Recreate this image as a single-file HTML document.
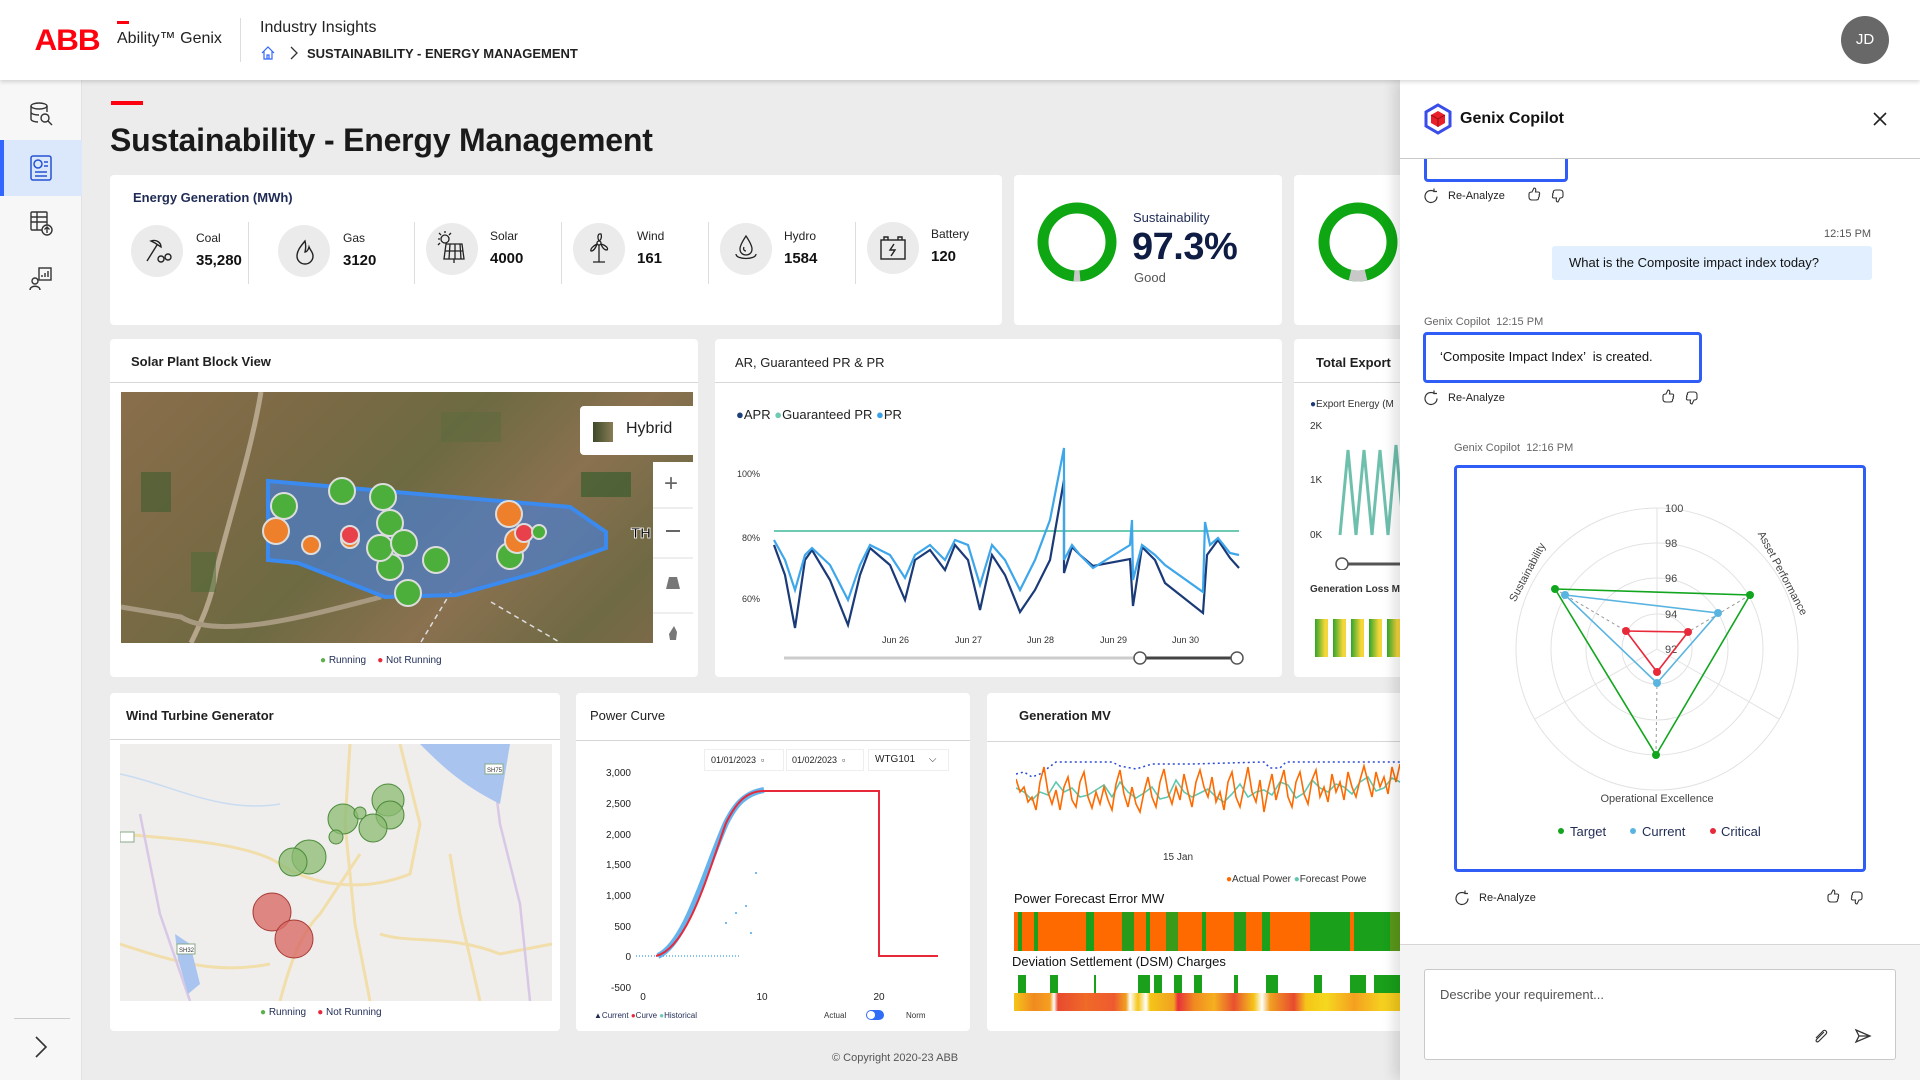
<!DOCTYPE html>
<html><head><meta charset="utf-8">
<style>
*{box-sizing:border-box;margin:0;padding:0}
body{width:1920px;height:1080px;overflow:hidden;background:#ececec;font-family:"Liberation Sans",sans-serif;color:#1f1f1f;position:relative}
.a{position:absolute}
.card{position:absolute;background:#fff;border-radius:4px}
.hd{position:absolute;left:0;right:0;top:0;border-bottom:1px solid #d6d6d6}
.t{position:absolute;white-space:nowrap}
.ic{position:absolute;width:52px;height:52px;border-radius:50%;background:#ebebeb}
.sep{position:absolute;top:222px;width:1px;height:62px;background:#ddd}
.lbl{font-size:12px;color:#222}
.val{font-size:15px;font-weight:bold;color:#111}
</style></head><body>

<!-- header -->
<div class="a" style="left:0;top:0;width:1920px;height:80px;background:#fff;box-shadow:0 2px 4px rgba(0,0,0,.15);z-index:3">
  <div class="t" style="left:36px;top:24px;font-size:30px;font-weight:bold;color:#ff000f;letter-spacing:-1px;transform:scaleX(1.05)">ABB</div>
  <div class="a" style="left:117px;top:21px;width:12px;height:3px;background:#ff000f"></div>
  <div class="t" style="left:117px;top:30px;font-size:16px;color:#222">Ability™ Genix</div>
  <div class="a" style="left:240px;top:18px;width:1px;height:44px;background:#ddd"></div>
  <div class="t" style="left:260px;top:19px;font-size:16px;color:#222">Industry Insights</div>
  <svg class="a" style="left:260px;top:45px" width="16" height="16" viewBox="0 0 16 16"><path d="M2 8 L8 2 L14 8 M4 6.5 V14 H12 V6.5 M7 14 V10 H9 V14" fill="none" stroke="#3366ff" stroke-width="1.2"/></svg>
  <svg class="a" style="left:289px;top:46px" width="10" height="14"><path d="M2 1 L8 7 L2 13" fill="none" stroke="#333" stroke-width="1.3"/></svg>
  <div class="t" style="left:307px;top:46px;font-size:13px;font-weight:bold;color:#222">SUSTAINABILITY - ENERGY MANAGEMENT</div>
  <div class="a" style="left:1841px;top:16px;width:48px;height:48px;border-radius:50%;background:#686868;color:#fff;font-size:15px;text-align:center;line-height:48px">JD</div>
</div>

<!-- sidebar -->
<div class="a" style="left:0;top:80px;width:82px;height:1000px;background:#f7f7f7;border-right:1px solid #e2e2e2">
  <svg class="a" style="left:28px;top:21px" width="26" height="26" viewBox="0 0 26 26" fill="none" stroke="#333" stroke-width="1.4"><ellipse cx="11" cy="5" rx="8" ry="3"/><path d="M3 5 V18 C3 20 7 21 10 21 M19 5 V11 M3 11 C3 13 7 14 11 14"/><circle cx="17" cy="17" r="4"/><path d="M20 20 L24 24"/></svg>
  <div class="a" style="left:0;top:60px;width:82px;height:56px;background:#dbe8fb"></div>
  <div class="a" style="left:0;top:60px;width:4px;height:56px;background:#3366ff"></div>
  <svg class="a" style="left:29px;top:74px" width="24" height="28" viewBox="0 0 24 28" fill="none" stroke="#2452d4" stroke-width="1.5"><rect x="2" y="2" width="20" height="24" rx="2"/><circle cx="9" cy="10" r="4"/><path d="M15 8 H19 M15 12 H19 M6 18 H18 M6 22 H18"/></svg>
  <svg class="a" style="left:29px;top:130px" width="26" height="28" viewBox="0 0 26 28" fill="none" stroke="#333" stroke-width="1.4"><rect x="2" y="2" width="16" height="18" rx="1"/><path d="M2 7 H18 M2 12 H18 M8 2 V20"/><circle cx="18" cy="20" r="5" fill="#f7f7f7"/><path d="M18 23 V17 M15.5 19.5 L18 17 L20.5 19.5"/></svg>
  <svg class="a" style="left:28px;top:186px" width="26" height="26" viewBox="0 0 26 26" fill="none" stroke="#333" stroke-width="1.4"><rect x="11" y="2" width="12" height="12"/><path d="M14 11 V9 M17 11 V7 M20 11 V5"/><circle cx="7" cy="15" r="3"/><path d="M2 24 C2 19 12 19 12 24"/></svg>
  <div class="a" style="left:14px;top:938px;width:56px;height:1px;background:#ccc"></div>
  <svg class="a" style="left:34px;top:955px" width="14" height="24"><path d="M2 2 L12 12 L2 22" fill="none" stroke="#333" stroke-width="1.6"/></svg>
</div>

<!-- title -->
<div class="a" style="left:111px;top:101px;width:32px;height:4px;background:#ff000f"></div>
<div class="t" style="left:110px;top:122px;font-size:32px;font-weight:bold;color:#1a1a1a;letter-spacing:-.2px">Sustainability - Energy Management</div>

<!-- energy card -->
<div class="card" style="left:110px;top:175px;width:892px;height:150px"></div>
<div class="t" style="left:133px;top:190px;font-size:13px;font-weight:bold;color:#1f2b55">Energy Generation (MWh)</div>
<div class="ic" style="left:131px;top:225px"></div>
<svg class="a" style="left:141px;top:235px" width="32" height="32" viewBox="0 0 32 32" fill="none" stroke="#222" stroke-width="1.4"><path d="M6 26 L16 10 M10 6 C16 4 20 8 20 12 L14 8 Z"/><circle cx="20" cy="24" r="3"/><circle cx="27" cy="22" r="3"/></svg>
<div class="t lbl" style="left:196px;top:231px">Coal</div><div class="t val" style="left:196px;top:252px">35,280</div>
<div class="sep" style="left:248px"></div>
<div class="ic" style="left:278px;top:225px"></div>
<svg class="a" style="left:292px;top:237px" width="26" height="30" viewBox="0 0 26 30" fill="none" stroke="#222" stroke-width="1.4"><path d="M13 4 C8 10 5 14 5 19 C5 24 9 27 13 27 C17 27 21 24 21 19 C21 15 18 13 17 10 C16 14 14 15 13 15 C14 11 14 8 13 4 Z"/></svg>
<div class="t lbl" style="left:343px;top:231px">Gas</div><div class="t val" style="left:343px;top:252px">3120</div>
<div class="sep" style="left:414px"></div>
<div class="ic" style="left:426px;top:223px"></div>
<svg class="a" style="left:434px;top:229px" width="36" height="36" viewBox="0 0 36 36" fill="none" stroke="#222" stroke-width="1.3"><circle cx="11" cy="10" r="4"/><path d="M11 2 V4 M4 10 H6 M5 4 L7 6 M17 4 L15 6 M4 16 L6 14"/><path d="M12 15 H28 L30 30 H10 Z M11 22 H29 M16 15 L15 30 M21 15 L21 30 M26 15 L27 30 M20 30 V34"/></svg>
<div class="t lbl" style="left:490px;top:229px">Solar</div><div class="t val" style="left:490px;top:250px">4000</div>
<div class="sep" style="left:561px"></div>
<div class="ic" style="left:573px;top:223px"></div>
<svg class="a" style="left:583px;top:231px" width="32" height="34" viewBox="0 0 32 34" fill="none" stroke="#222" stroke-width="1.3"><circle cx="16" cy="12" r="2"/><path d="M16 10 C14 6 15 2 18 3 C19 6 18 9 16 10 M18 13 C22 14 26 17 24 19 C21 19 19 16 18 13 M14 13 C10 15 7 18 8 20 C11 20 13 16 14 13 M16 14 V31 M10 31 H22"/></svg>
<div class="t lbl" style="left:637px;top:229px">Wind</div><div class="t val" style="left:637px;top:250px">161</div>
<div class="sep" style="left:708px"></div>
<div class="ic" style="left:720px;top:223px"></div>
<svg class="a" style="left:730px;top:232px" width="32" height="32" viewBox="0 0 32 32" fill="none" stroke="#222" stroke-width="1.3"><path d="M16 4 C12 10 10 14 10 17 C10 21 13 23 16 23 C19 23 22 21 22 17 C22 14 20 10 16 4 Z M14 15 C13 17 14 19 16 19"/><path d="M6 22 C6 28 26 28 26 22"/></svg>
<div class="t lbl" style="left:784px;top:229px">Hydro</div><div class="t val" style="left:784px;top:250px">1584</div>
<div class="sep" style="left:855px"></div>
<div class="ic" style="left:867px;top:222px"></div>
<svg class="a" style="left:878px;top:234px" width="30" height="28" viewBox="0 0 30 28" fill="none" stroke="#222" stroke-width="1.4"><rect x="3" y="6" width="24" height="19"/><path d="M6 6 V3 H10 V6 M20 6 V3 H24 V6 M16 10 L12 16 H17 L13 22"/></svg>
<div class="t lbl" style="left:931px;top:227px">Battery</div><div class="t val" style="left:931px;top:248px">120</div>

<!-- sustainability card -->
<div class="card" style="left:1014px;top:175px;width:268px;height:150px"></div>
<svg class="a" style="left:1033px;top:198px" width="88" height="88"><circle cx="44" cy="44" r="34" fill="none" stroke="#0ea612" stroke-width="11"/><path d="M41 78 A34 34 0 0 0 47 78" stroke="#c8c8c8" stroke-width="11" fill="none"/></svg>
<div class="t" style="left:1133px;top:210px;font-size:13px;color:#1f2b55">Sustainability</div>
<div class="t" style="left:1132px;top:226px;font-size:38px;font-weight:bold;color:#0f1d45;letter-spacing:-.5px">97.3%</div>
<div class="t" style="left:1134px;top:270px;font-size:13px;color:#555">Good</div>
<div class="card" style="left:1294px;top:175px;width:140px;height:150px"></div>
<svg class="a" style="left:1314px;top:198px" width="88" height="88"><circle cx="44" cy="44" r="34" fill="none" stroke="#0ea612" stroke-width="11"/><path d="M36 77 A34 34 0 0 0 52 77" stroke="#c8c8c8" stroke-width="11" fill="none"/></svg>

<!-- solar card -->
<div class="card" style="left:110px;top:339px;width:588px;height:338px"><div class="hd" style="height:44px"></div></div>
<div class="t" style="left:131px;top:354px;font-size:13px;font-weight:bold">Solar Plant Block View</div>
<div class="a" style="left:121px;top:392px;width:572px;height:251px;overflow:hidden;background:linear-gradient(135deg,#8a6e4c 0%,#7b6a45 25%,#6d6a42 45%,#8a7150 65%,#6f6a44 85%,#81694a 100%)">
<svg width="572" height="251" style="position:absolute;left:0;top:0">
 <path d="M140 0 C130 60 110 120 95 180 C90 210 80 230 70 251" stroke="#b5a58a" stroke-width="5" fill="none"/>
 <path d="M0 215 L60 225 C100 250 200 220 260 205" stroke="#a89a80" stroke-width="5" fill="none"/>
 <rect x="20" y="80" width="30" height="40" fill="#3f5b2e" opacity=".6"/><rect x="460" y="80" width="50" height="25" fill="#2f5a2a" opacity=".6"/>
 <rect x="70" y="160" width="25" height="40" fill="#4a6a34" opacity=".5"/><rect x="320" y="20" width="60" height="30" fill="#5b6a3c" opacity=".5"/>
 <path d="M300 250 L330 200 M370 210 L440 251" stroke="#ddd" stroke-width="1.5" stroke-dasharray="5 4" fill="none"/>
 <polygon points="147,89 449,115 485,140 485,156 414,181 335,203 264,205 177,171 147,168" fill="#4a7fd0" fill-opacity=".7" stroke="#3a8af0" stroke-width="4"/>
 <g stroke="#ddd" stroke-width="2">
 <circle cx="163" cy="114" r="13" fill="#4caf3c"/><circle cx="155" cy="139" r="13" fill="#ee7f2b"/><circle cx="190" cy="153" r="9" fill="#ee7f2b"/>
 <circle cx="229" cy="147" r="9" fill="#ee7f2b"/><circle cx="229" cy="143" r="9" fill="#e8414b"/>
 <circle cx="221" cy="99" r="13" fill="#4caf3c"/><circle cx="262" cy="105" r="13" fill="#4caf3c"/><circle cx="269" cy="131" r="13" fill="#4caf3c"/>
 <circle cx="269" cy="175" r="13" fill="#4caf3c"/><circle cx="259" cy="156" r="13" fill="#4caf3c"/><circle cx="283" cy="151" r="13" fill="#4caf3c"/>
 <circle cx="315" cy="168" r="13" fill="#4caf3c"/><circle cx="287" cy="201" r="13" fill="#4caf3c"/>
 <circle cx="388" cy="122" r="13" fill="#ee7f2b"/><circle cx="389" cy="164" r="13" fill="#4caf3c"/><circle cx="396" cy="149" r="12" fill="#ee7f2b"/>
 <circle cx="403" cy="141" r="9" fill="#e8414b"/><circle cx="418" cy="140" r="7" fill="#4caf3c"/></g>
 <text x="510" y="146" font-size="15" font-weight="bold" fill="#000" stroke="#fff" stroke-width=".8" font-family="Liberation Sans">TH</text>
</svg>
<div class="a" style="left:459px;top:14px;width:113px;height:49px;background:#fff;border-radius:4px 0 0 4px"></div>
<div class="a" style="left:472px;top:30px;width:20px;height:20px;background:linear-gradient(90deg,#3c4a2a,#8a7b55)"></div>
<div class="t" style="left:505px;top:28px;font-size:16px;color:#222">Hybrid</div>
<div class="a" style="left:532px;top:70px;width:40px;height:181px;background:#fff"></div>
<div class="t" style="left:543px;top:78px;font-size:24px;color:#666">+</div>
<div class="a" style="left:532px;top:115px;width:40px;height:2px;background:#eee"></div>
<div class="a" style="left:545px;top:138px;width:14px;height:2px;background:#666"></div>
<div class="a" style="left:532px;top:165px;width:40px;height:2px;background:#eee"></div>
<svg class="a" style="left:545px;top:185px" width="14" height="12"><path d="M3 0 H11 L14 12 H0 Z" fill="#777"/></svg>
<div class="a" style="left:532px;top:220px;width:40px;height:2px;background:#eee"></div>
<svg class="a" style="left:547px;top:234px" width="10" height="14"><path d="M6 0 L1 8 L2 14 H8 L9 6 Z" fill="#777"/></svg>
</div>
<div class="t" style="left:320px;top:655px;font-size:10px;color:#1f2b55"><span style="color:#5bb04c">●</span> Running &nbsp;&nbsp; <span style="color:#e8293a">●</span> Not Running</div>

<!-- AR card -->
<div class="card" style="left:715px;top:339px;width:567px;height:338px"><div class="hd" style="height:44px"></div></div>
<div class="t" style="left:735px;top:355px;font-size:13px">AR, Guaranteed PR &amp; PR</div>
<div class="t" style="left:736px;top:407px;font-size:13px;color:#222"><span style="color:#1f3f7a">●</span>APR <span style="color:#6fcab4">●</span>Guaranteed PR <span style="color:#3aa0e8">●</span>PR</div>
<div class="t" style="left:737px;top:469px;font-size:9px;color:#333">100%</div>
<div class="t" style="left:742px;top:533px;font-size:9px;color:#333">80%</div>
<div class="t" style="left:742px;top:594px;font-size:9px;color:#333">60%</div>
<svg class="a" style="left:0;top:0" width="1300" height="680">
 <line x1="774" y1="531" x2="1239" y2="531" stroke="#6fcab4" stroke-width="2"/>
 <polyline fill="none" stroke="#1a3a78" stroke-width="2.2" points="774,545 785,575 795,628 805,560 812,550 830,580 848,625 860,575 870,548 890,565 905,600 915,560 930,550 945,570 955,545 968,560 980,610 992,555 1005,575 1020,612 1035,590 1050,560 1064,480 1064,573 1072,547 1080,555 1093,566 1130,559 1133,606 1142,547 1155,560 1165,583 1203,613 1207,555 1218,540 1230,558 1239,568"/>
 <polyline fill="none" stroke="#3ea6ea" stroke-width="2.2" points="774,540 785,560 795,590 805,555 812,548 830,565 848,600 860,565 870,545 890,555 905,578 915,555 930,545 945,560 955,540 968,545 980,585 992,545 1005,560 1020,590 1035,560 1050,520 1064,448 1064,560 1072,545 1080,555 1093,568 1130,545 1132,520 1133,580 1142,545 1155,555 1165,565 1203,592 1205,522 1210,545 1218,538 1230,553 1239,555"/>
 <line x1="784" y1="658" x2="1140" y2="658" stroke="#ccc" stroke-width="3"/>
 <line x1="1140" y1="658" x2="1237" y2="658" stroke="#444" stroke-width="3"/>
 <circle cx="1140" cy="658" r="6" fill="#fff" stroke="#555" stroke-width="1.5"/><circle cx="1237" cy="658" r="6" fill="#fff" stroke="#555" stroke-width="1.5"/>
 <g font-size="9" fill="#333" font-family="Liberation Sans"><text x="882" y="643">Jun 26</text><text x="955" y="643">Jun 27</text><text x="1027" y="643">Jun 28</text><text x="1100" y="643">Jun 29</text><text x="1172" y="643">Jun 30</text></g>
</svg>

<!-- total export -->
<div class="card" style="left:1294px;top:339px;width:140px;height:338px"><div class="hd" style="height:44px"></div></div>
<div class="t" style="left:1316px;top:355px;font-size:13px;font-weight:bold">Total Export</div>
<div class="t" style="left:1310px;top:399px;font-size:10px;color:#333"><span style="color:#1a3a78">●</span>Export Energy (M</div>
<div class="t" style="left:1310px;top:421px;font-size:10px;color:#333">2K</div>
<div class="t" style="left:1310px;top:475px;font-size:10px;color:#333">1K</div>
<div class="t" style="left:1310px;top:530px;font-size:10px;color:#333">0K</div>
<svg class="a" style="left:1330px;top:440px" width="80" height="130"><polyline fill="none" stroke="#6fbfad" stroke-width="3" points="10,95 18,10 26,95 34,10 42,95 50,10 58,95 66,5 74,95"/><line x1="12" y1="124" x2="80" y2="124" stroke="#555" stroke-width="3"/><circle cx="12" cy="124" r="6" fill="#fff" stroke="#555" stroke-width="1.5"/></svg>
<div class="t" style="left:1310px;top:584px;font-size:10px;font-weight:bold;color:#333">Generation Loss M</div>
<div class="a" style="left:1315px;top:619px;width:100px;height:38px;background:repeating-linear-gradient(90deg,#2ea52a 0,#f5d63a 10px,#f5d63a 13px,#fff 13px,#fff 18px)"></div>

<!-- wind card -->
<div class="card" style="left:110px;top:693px;width:450px;height:338px"><div class="hd" style="height:47px"></div></div>
<div class="t" style="left:126px;top:708px;font-size:13px;font-weight:bold">Wind Turbine Generator</div>
<div class="a" style="left:120px;top:744px;width:432px;height:257px;background:#efeeec;overflow:hidden">
<svg width="432" height="257">
 <g fill="none" stroke="#f1deaa" stroke-width="3">
 <path d="M230 0 L225 80 L235 180 L250 257"/><path d="M0 90 C60 95 130 100 160 120 C190 140 240 150 290 130 L300 80 L280 0"/>
 <path d="M160 257 C170 220 180 190 200 170 L240 110"/><path d="M260 190 C290 200 330 190 380 210 L432 200"/><path d="M0 200 C60 220 100 230 150 220"/><path d="M330 110 L340 170 L360 257"/></g>
 <g fill="none" stroke="#d8c8e6" stroke-width="2.5"><path d="M20 70 L40 170 L70 257"/><path d="M370 0 L380 80 L400 160 L410 257"/></g>
 <path d="M300 0 C320 20 340 40 380 60 L390 0 Z" fill="#a9c4ef"/>
 <path d="M55 190 L70 200 L80 240 L68 250 L58 215 Z" fill="#a9c4ef"/>
 <path d="M0 30 C50 40 100 70 160 60" stroke="#c9dcf1" stroke-width="1.5" fill="none"/>
 <g fill="#8bbb72" fill-opacity=".75" stroke="#4b8a3a" stroke-width="1">
 <circle cx="268" cy="56" r="16"/><circle cx="270" cy="71" r="14"/><circle cx="223" cy="75" r="15"/><circle cx="253" cy="84" r="14"/><circle cx="240" cy="69" r="6"/><circle cx="216" cy="93" r="7"/><circle cx="189" cy="113" r="17"/><circle cx="173" cy="118" r="14"/></g>
 <g fill="#d96b66" fill-opacity=".8" stroke="#a83a35" stroke-width="1"><circle cx="152" cy="168" r="19"/><circle cx="174" cy="195" r="19"/></g>
 <g font-size="6" fill="#333" font-family="Liberation Sans"><rect x="365" y="20" width="18" height="10" fill="#fff" stroke="#8a8"/><text x="367" y="28">SH75</text><rect x="0" y="88" width="14" height="10" fill="#fff" stroke="#8a8"/><rect x="57" y="200" width="18" height="10" fill="#fff" stroke="#8a8"/><text x="59" y="208">SH32</text></g>
</svg></div>
<div class="t" style="left:260px;top:1007px;font-size:10px;color:#1f2b55"><span style="color:#5bb04c">●</span> Running &nbsp;&nbsp; <span style="color:#e8293a">●</span> Not Running</div>

<!-- power curve -->
<div class="card" style="left:576px;top:693px;width:394px;height:338px"><div class="hd" style="height:48px"></div></div>
<div class="t" style="left:590px;top:708px;font-size:13px">Power Curve</div>
<div class="a" style="left:704px;top:749px;width:80px;height:22px;border:1px solid #eee;font-size:9px;padding:5px 6px">01/01/2023 &nbsp;▫</div>
<div class="a" style="left:786px;top:749px;width:78px;height:22px;border:1px solid #eee;font-size:9px;padding:5px 5px">01/02/2023 &nbsp;▫</div>
<div class="a" style="left:868px;top:749px;width:81px;height:22px;border:1px solid #eee;font-size:10px;padding:4px 6px">WTG101 &nbsp;&nbsp;&nbsp;&nbsp;⌵</div>
<svg class="a" style="left:576px;top:693px" width="394" height="338" font-family="Liberation Sans">
 <g font-size="10" fill="#222" text-anchor="end"><text x="55" y="83">3,000</text><text x="55" y="114">2,500</text><text x="55" y="145">2,000</text><text x="55" y="175">1,500</text><text x="55" y="206">1,000</text><text x="55" y="237">500</text><text x="55" y="267">0</text><text x="55" y="298">-500</text></g>
 <g font-size="10" fill="#222" text-anchor="middle"><text x="67" y="307">0</text><text x="186" y="307">10</text><text x="303" y="307">20</text></g>
 <path d="M60 263 H165" stroke="#5aaee8" stroke-width="1.5" stroke-dasharray="1 2"/>
 <path d="M82 263 C110 250 128 180 150 130 C160 110 170 100 188 97" stroke="#4aa6ea" stroke-width="6" fill="none" opacity=".85"/>
 <path d="M80 263 C112 255 132 180 150 130 C160 110 170 98 188 98 H303 V263 H362" stroke="#e8293a" stroke-width="2" fill="none"/>
 <g fill="#4aa6ea"><circle cx="160" cy="220" r="1"/><circle cx="170" cy="213" r="1"/><circle cx="150" cy="230" r="1"/><circle cx="175" cy="240" r="1"/><circle cx="180" cy="180" r="1"/></g>
 <text x="18" y="325" font-size="8" fill="#1f2b55">▲Current <tspan fill="#e8293a">●</tspan>Curve <tspan fill="#6fcab4">●</tspan>Historical</text>
 <text x="248" y="325" font-size="8" fill="#333">Actual</text>
 <rect x="290" y="317" width="18" height="10" rx="5" fill="#2f6df6"/><circle cx="295" cy="322" r="4" fill="#fff"/>
 <text x="330" y="325" font-size="8" fill="#333">Norm</text>
</svg>

<!-- generation MV -->
<div class="card" style="left:987px;top:693px;width:450px;height:338px"><div class="hd" style="height:49px"></div></div>
<div class="t" style="left:1019px;top:708px;font-size:13px;font-weight:bold">Generation MV</div>
<svg class="a" style="left:1016px;top:752px" width="400" height="80">
 <polyline fill="none" stroke="#2a4ad8" stroke-width="1.5" stroke-dasharray="2 3" points="0,22 8,20 16,25 24,22 32,16 40,10 96,10 104,14 120,17 136,12 176,12 248,10 254,16 264,16 270,10 400,10"/>
 <polyline fill="none" stroke="#5ec8b0" stroke-width="1.6" points="0,36 8,40 16,48 24,40 32,43 40,30 48,40 56,36 64,45 72,43 80,38 88,33 96,45 104,30 112,40 120,46 128,41 136,35 144,47 152,45 160,28 168,40 176,45 184,41 192,37 200,45 208,50 216,42 224,32 232,45 240,40 248,38 256,43 264,30 272,33 280,46 288,41 296,28 304,36 312,40 320,32 328,35 336,42 344,30 352,25 360,39 368,36 376,26 384,30 392,35 400,30"/>
 <polyline fill="none" stroke="#ff6a00" stroke-width="1.6" points="0,27 4,40 8,35 12,50 16,45 20,58 24,30 28,15 32,40 36,52 40,38 44,58 48,35 52,25 56,48 60,55 64,30 68,20 72,45 76,56 80,40 84,52 88,35 92,48 96,58 100,32 104,18 108,42 112,55 116,35 120,52 124,60 128,40 132,25 136,45 140,55 144,30 148,17 152,40 156,52 160,35 164,48 168,22 172,40 176,55 180,30 184,18 188,35 192,45 196,25 200,50 204,40 208,58 212,30 216,20 220,45 224,55 228,35 232,15 236,40 240,50 244,28 248,60 252,38 256,22 260,48 264,32 268,18 272,45 276,55 280,30 284,20 288,42 292,52 296,28 300,18 304,45 308,35 312,50 316,22 320,40 324,30 328,48 332,20 336,35 340,45 344,28 348,14 352,30 356,45 360,20 364,35 368,25 372,42 376,15 380,30 384,12 388,28 392,20 396,35 400,25"/>
</svg>
<div class="t" style="left:1163px;top:852px;font-size:10px;color:#333">15 Jan</div>
<div class="t" style="left:1226px;top:874px;font-size:10px;color:#333"><span style="color:#ff6a00">●</span>Actual Power <span style="color:#5ec8b0">●</span>Forecast Powe</div>
<div class="t" style="left:1014px;top:891px;font-size:13px;color:#111">Power Forecast Error MW</div>
<div class="a" style="left:1014px;top:912px;width:400px;height:39px;background:linear-gradient(90deg,#ff6a00 0,#ff6a00 1%,#1aa01a 1%,#1aa01a 2%,#ff6a00 2%,#ff6a00 5%,#1aa01a 5%,#1aa01a 6%,#ff6a00 6%,#ff6a00 18%,#1aa01a 18%,#1aa01a 20%,#ff6a00 20%,#ff6a00 27%,#2a9a1a 27%,#2a9a1a 30%,#ff6a00 30%,#ff6a00 33%,#1aa01a 33%,#1aa01a 34%,#ff6a00 34%,#ff6a00 38%,#3a9a1a 38%,#3a9a1a 41%,#ff6a00 41%,#ff6a00 47%,#1aa01a 47%,#1aa01a 48%,#ff6a00 48%,#ff6a00 55%,#2a9a1a 55%,#2a9a1a 58%,#ff6a00 58%,#ff6a00 62%,#1aa01a 62%,#1aa01a 64%,#ff6a00 64%,#ff6a00 74%,#1aa01a 74%,#1aa01a 84%,#ff6a00 84%,#ff6a00 85%,#1aa01a 85%,#1aa01a 94%,#5a9a1a 94%,#5a9a1a 100%)"></div>
<div class="t" style="left:1012px;top:954px;font-size:13px;color:#111">Deviation Settlement (DSM) Charges</div>
<div class="a" style="left:1014px;top:975px;width:400px;height:18px;background:linear-gradient(90deg,#fff 0,#fff 1%,#1aa01a 1%,#1aa01a 3%,#fff 3%,#fff 9%,#1aa01a 9%,#1aa01a 11%,#fff 11%,#fff 20%,#1aa01a 20%,#1aa01a 20.5%,#fff 20.5%,#fff 31%,#1aa01a 31%,#1aa01a 34%,#fff 34%,#fff 35%,#1aa01a 35%,#1aa01a 37%,#fff 37%,#fff 40%,#1aa01a 40%,#1aa01a 42%,#fff 42%,#fff 45%,#1aa01a 45%,#1aa01a 47%,#fff 47%,#fff 55%,#1aa01a 55%,#1aa01a 56%,#fff 56%,#fff 63%,#1aa01a 63%,#1aa01a 66%,#fff 66%,#fff 75%,#1aa01a 75%,#1aa01a 77%,#fff 77%,#fff 84%,#1aa01a 84%,#1aa01a 88%,#fff 88%,#fff 90%,#1aa01a 90%,#1aa01a 100%)"></div>
<div class="a" style="left:1014px;top:993px;width:400px;height:18px;background:linear-gradient(90deg,#f5c518 0,#f08a20 5%,#f5a020 9%,#fff 10%,#e84a30 11%,#f06a28 18%,#ee5a30 25%,#f0a020 28%,#fff 29%,#f5c518 31%,#fff 33%,#f5c518 34%,#f0a020 40%,#e8303a 41%,#f08a20 45%,#f5b020 50%,#e85030 55%,#f5c518 60%,#fff 62%,#f0a020 64%,#e84a30 70%,#f5c518 73%,#f5d820 78%,#f5a020 85%,#f5d020 92%,#f5c518 100%)"></div>

<div class="t" style="left:832px;top:1052px;font-size:11px;color:#555">© Copyright 2020-23 ABB</div>

<!-- copilot panel -->
<div class="a" style="left:1400px;top:80px;width:520px;height:1000px;background:#fff;box-shadow:-6px 0 12px rgba(0,0,0,.12);z-index:2">
 <div class="a" style="left:0;top:864px;width:520px;height:136px;background:#f4f4f4;border-top:1px solid #d6d6d6"></div>
 <div class="a" style="left:24px;top:889px;width:472px;height:91px;background:#fff;border:1px solid #c9c9c9;border-radius:3px"></div>
 <div class="t" style="left:40px;top:907px;font-size:13px;color:#555">Describe your requirement...</div>
 <svg class="a" style="left:412px;top:948px" width="18" height="18" viewBox="0 0 18 18"><path d="M12 4 L5 11 C3 13 5 15 7 13 L14 6 C16 4 13 1 11 3 L4 10" fill="none" stroke="#333" stroke-width="1.2"/></svg>
 <svg class="a" style="left:454px;top:948px" width="18" height="16" viewBox="0 0 18 16"><path d="M2 2 L16 8 L2 14 L5 8 Z M5 8 H16" fill="none" stroke="#333" stroke-width="1.3"/></svg>

 <div class="a" style="left:0;top:0;width:520px;height:79px;border-bottom:1px solid #c9c9c9;background:#fff;z-index:2"></div>
 <svg class="a" style="left:23px;top:23px;z-index:3" width="30" height="32" viewBox="0 0 30 32"><path d="M15 2 L27 9 V23 L15 30 L3 23 V9 Z" fill="#fff" stroke="#3a4de8" stroke-width="3"/><path d="M15 8 L22 12 V20 L15 24 L8 20 V12 Z" fill="#e8202a"/><path d="M8 12 L15 16 L22 12 M15 16 V24" stroke="#9a0d15" stroke-width="1" fill="none"/></svg>
 <div class="t" style="left:60px;top:30px;font-size:16px;font-weight:bold;color:#111;z-index:3">Genix Copilot</div>
 <svg class="a" style="left:473px;top:32px;z-index:3" width="14" height="14"><path d="M1 1 L13 13 M13 1 L1 13" stroke="#222" stroke-width="1.6"/></svg>

 <div class="a" style="left:24px;top:60px;width:144px;height:42px;border:3px solid #2f5df6;border-radius:4px"></div>
 <svg class="a" style="left:23px;top:108px" width="17" height="17" viewBox="0 0 17 17"><path d="M14 8.5 A6 6 0 1 1 11 3.3 M11 0.5 V3.5 H14" fill="none" stroke="#333" stroke-width="1.2"/></svg>
 <div class="t" style="left:48px;top:110px;font-size:11px;color:#222">Re-Analyze</div>
 <svg class="a" style="left:126px;top:107px" width="16" height="16" viewBox="0 0 16 16"><path d="M3 7 C3 5 5 5 6 5 L8 1 C10 1 10 3 9.5 5 H12 C14 5 14 7 13 8 C14 9 13 10 12.5 10.5 C13 12 12 13 10 13 H6 C4 13 3 12 3 10 Z" fill="none" stroke="#333" stroke-width="1.1"/></svg>
 <svg class="a" style="left:150px;top:107px" width="16" height="16" viewBox="0 0 16 16"><path d="M13 9 C13 11 11 11 10 11 L8 15 C6 15 6 13 6.5 11 H4 C2 11 2 9 3 8 C2 7 3 6 3.5 5.5 C3 4 4 3 6 3 H10 C12 3 13 4 13 6 Z" fill="none" stroke="#333" stroke-width="1.1"/></svg>

 <div class="t" style="left:424px;top:148px;font-size:11px;color:#555">12:15 PM</div>
 <div class="a" style="left:152px;top:166px;width:320px;height:34px;background:#e1efff;border-radius:3px;font-size:13px;color:#111;padding:9px 0 0 17px">What is the Composite impact index today?</div>

 <div class="t" style="left:24px;top:236px;font-size:11px;color:#666">Genix Copilot &nbsp;12:15 PM</div>
 <div class="a" style="left:23px;top:252px;width:279px;height:51px;border:3px solid #2f5df6;border-radius:4px;font-size:13px;color:#111;padding:14px 0 0 14px">‘Composite Impact Index’ &nbsp;is created.</div>
 <svg class="a" style="left:23px;top:310px" width="17" height="17" viewBox="0 0 17 17"><path d="M14 8.5 A6 6 0 1 1 11 3.3 M11 0.5 V3.5 H14" fill="none" stroke="#333" stroke-width="1.2"/></svg>
 <div class="t" style="left:48px;top:312px;font-size:11px;color:#222">Re-Analyze</div>
 <svg class="a" style="left:260px;top:309px" width="16" height="16" viewBox="0 0 16 16"><path d="M3 7 C3 5 5 5 6 5 L8 1 C10 1 10 3 9.5 5 H12 C14 5 14 7 13 8 C14 9 13 10 12.5 10.5 C13 12 12 13 10 13 H6 C4 13 3 12 3 10 Z" fill="none" stroke="#333" stroke-width="1.1"/></svg>
 <svg class="a" style="left:284px;top:309px" width="16" height="16" viewBox="0 0 16 16"><path d="M13 9 C13 11 11 11 10 11 L8 15 C6 15 6 13 6.5 11 H4 C2 11 2 9 3 8 C2 7 3 6 3.5 5.5 C3 4 4 3 6 3 H10 C12 3 13 4 13 6 Z" fill="none" stroke="#333" stroke-width="1.1"/></svg>

 <div class="t" style="left:54px;top:362px;font-size:11px;color:#666">Genix Copilot &nbsp;12:16 PM</div>
 <div class="a" style="left:54px;top:385px;width:412px;height:407px;border:3px solid #2f5df6;border-radius:4px"></div>
 <svg class="a" style="left:0;top:0" width="520" height="1000" font-family="Liberation Sans">
  <g transform="translate(-1400,-80)">
  <g fill="none" stroke="#e2e2e2" stroke-width="1"><circle cx="1657" cy="649" r="35"/><circle cx="1657" cy="649" r="71"/><circle cx="1657" cy="649" r="106"/><circle cx="1657" cy="649" r="141"/>
  <path d="M1657 649 V508 M1657 649 L1535 719 M1657 649 L1779 719"/></g>
  <g font-size="11" fill="#444"><text x="1665" y="512">100</text><text x="1665" y="547">98</text><text x="1665" y="582">96</text><text x="1665" y="618">94</text><text x="1665" y="653">92</text></g>
  <g stroke="#999" stroke-dasharray="3 3" fill="none"><path d="M1555 589 L1626 631 M1750 595 L1688 632 M1656 755 L1657 683"/></g>
  <polygon points="1555,589 1750,595 1656,755" fill="none" stroke="#12a51e" stroke-width="1.6"/>
  <polygon points="1565,595 1718,613 1657,683" fill="none" stroke="#5ab4e0" stroke-width="1.6"/>
  <polygon points="1626,631 1688,632 1657,672" fill="none" stroke="#e8293a" stroke-width="1.6"/>
  <g fill="#12a51e"><circle cx="1555" cy="589" r="4"/><circle cx="1750" cy="595" r="4"/><circle cx="1656" cy="755" r="4"/></g>
  <g fill="#5ab4e0"><circle cx="1565" cy="595" r="4"/><circle cx="1718" cy="613" r="4"/><circle cx="1657" cy="683" r="4"/></g>
  <g fill="#e8293a"><circle cx="1626" cy="631" r="4"/><circle cx="1688" cy="632" r="4"/><circle cx="1657" cy="672" r="4"/></g>
  <text x="1527" y="576" font-size="11" fill="#444" text-anchor="middle" transform="rotate(-62 1527 572)">Sustainability</text>
  <text x="1783" y="577" font-size="11" fill="#444" text-anchor="middle" transform="rotate(62 1783 573)">Asset Performance</text>
  <text x="1657" y="802" font-size="11" fill="#444" text-anchor="middle">Operational Excellence</text>
  <g font-size="13" fill="#1f2b55"><circle cx="1561" cy="831" r="3" fill="#12a51e"/><text x="1570" y="836">Target</text><circle cx="1633" cy="831" r="3" fill="#5ab4e0"/><text x="1642" y="836">Current</text><circle cx="1713" cy="831" r="3" fill="#e8293a"/><text x="1721" y="836">Critical</text></g>
  </g>
 </svg>
 <svg class="a" style="left:54px;top:810px" width="17" height="17" viewBox="0 0 17 17"><path d="M14 8.5 A6 6 0 1 1 11 3.3 M11 0.5 V3.5 H14" fill="none" stroke="#333" stroke-width="1.2"/></svg>
 <div class="t" style="left:79px;top:812px;font-size:11px;color:#222">Re-Analyze</div>
 <svg class="a" style="left:425px;top:809px" width="16" height="16" viewBox="0 0 16 16"><path d="M3 7 C3 5 5 5 6 5 L8 1 C10 1 10 3 9.5 5 H12 C14 5 14 7 13 8 C14 9 13 10 12.5 10.5 C13 12 12 13 10 13 H6 C4 13 3 12 3 10 Z" fill="none" stroke="#333" stroke-width="1.1"/></svg>
 <svg class="a" style="left:449px;top:809px" width="16" height="16" viewBox="0 0 16 16"><path d="M13 9 C13 11 11 11 10 11 L8 15 C6 15 6 13 6.5 11 H4 C2 11 2 9 3 8 C2 7 3 6 3.5 5.5 C3 4 4 3 6 3 H10 C12 3 13 4 13 6 Z" fill="none" stroke="#333" stroke-width="1.1"/></svg>
</div>
</body></html>
